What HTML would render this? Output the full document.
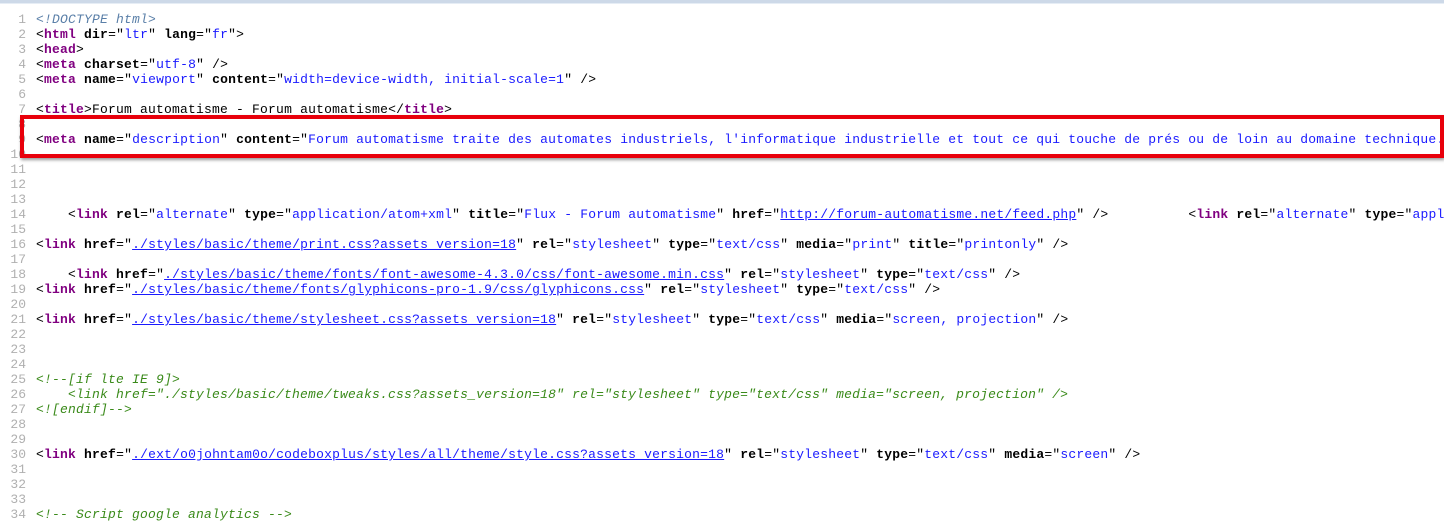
<!DOCTYPE html>
<html><head><meta charset="utf-8"><style>
html,body{margin:0;padding:0;background:#fff;width:1444px;height:519px;overflow:hidden}
.top{position:absolute;left:0;top:0;width:1444px;height:3px;background:#cdd9e8;border-bottom:1px solid #e6edf5}
.code{position:absolute;left:0;top:12px;font:13px/15px "Liberation Mono",monospace;letter-spacing:0.2px;white-space:pre;color:#000}
.ln{display:inline-block;width:26px;text-align:right;color:#b0b0b0;margin-right:10px;letter-spacing:0}
.t{color:#800080;font-weight:bold}
.a{font-weight:bold}
.v{color:#1a1aff}
.u{color:#1a1aff;text-decoration:underline}
.c{color:#3a8a1a;font-style:italic}
.d{color:#5a7fa8;font-style:italic}
.box{position:absolute;left:20px;top:115px;width:1416px;height:35px;border:4px solid #e8000b;box-shadow:1px 2px 3px rgba(0,0,0,.4)}
</style></head><body>
<div class="top"></div>
<div class="code"><span class="ln">1</span><span class="d">&lt;!DOCTYPE html&gt;</span>
<span class="ln">2</span>&lt;<span class="t">html</span> <span class="a">dir</span>="<span class="v">ltr</span>" <span class="a">lang</span>="<span class="v">fr</span>"&gt;
<span class="ln">3</span>&lt;<span class="t">head</span>&gt;
<span class="ln">4</span>&lt;<span class="t">meta</span> <span class="a">charset</span>="<span class="v">utf-8</span>" /&gt;
<span class="ln">5</span>&lt;<span class="t">meta</span> <span class="a">name</span>="<span class="v">viewport</span>" <span class="a">content</span>="<span class="v">width=device-width, initial-scale=1</span>" /&gt;
<span class="ln">6</span>
<span class="ln">7</span>&lt;<span class="t">title</span>&gt;Forum automatisme - Forum automatisme&lt;/<span class="t">title</span>&gt;
<span class="ln">8</span>
<span class="ln">9</span>&lt;<span class="t">meta</span> <span class="a">name</span>="<span class="v">description</span>" <span class="a">content</span>="<span class="v">Forum automatisme traite des automates industriels, l'informatique industrielle et tout ce qui touche de prés ou de loin au domaine technique.</span>
<span class="ln">10</span>
<span class="ln">11</span>
<span class="ln">12</span>
<span class="ln">13</span>
<span class="ln">14</span>    &lt;<span class="t">link</span> <span class="a">rel</span>="<span class="v">alternate</span>" <span class="a">type</span>="<span class="v">application/atom+xml</span>" <span class="a">title</span>="<span class="v">Flux - Forum automatisme</span>" <span class="a">href</span>="<span class="u">http://forum-automatisme.net/feed.php</span>" /&gt;          &lt;<span class="t">link</span> <span class="a">rel</span>="<span class="v">alternate</span>" <span class="a">type</span>="<span class="v">appl</span>
<span class="ln">15</span>
<span class="ln">16</span>&lt;<span class="t">link</span> <span class="a">href</span>="<span class="u">./styles/basic/theme/print.css?assets_version=18</span>" <span class="a">rel</span>="<span class="v">stylesheet</span>" <span class="a">type</span>="<span class="v">text/css</span>" <span class="a">media</span>="<span class="v">print</span>" <span class="a">title</span>="<span class="v">printonly</span>" /&gt;
<span class="ln">17</span>
<span class="ln">18</span>    &lt;<span class="t">link</span> <span class="a">href</span>="<span class="u">./styles/basic/theme/fonts/font-awesome-4.3.0/css/font-awesome.min.css</span>" <span class="a">rel</span>="<span class="v">stylesheet</span>" <span class="a">type</span>="<span class="v">text/css</span>" /&gt;
<span class="ln">19</span>&lt;<span class="t">link</span> <span class="a">href</span>="<span class="u">./styles/basic/theme/fonts/glyphicons-pro-1.9/css/glyphicons.css</span>" <span class="a">rel</span>="<span class="v">stylesheet</span>" <span class="a">type</span>="<span class="v">text/css</span>" /&gt;
<span class="ln">20</span>
<span class="ln">21</span>&lt;<span class="t">link</span> <span class="a">href</span>="<span class="u">./styles/basic/theme/stylesheet.css?assets_version=18</span>" <span class="a">rel</span>="<span class="v">stylesheet</span>" <span class="a">type</span>="<span class="v">text/css</span>" <span class="a">media</span>="<span class="v">screen, projection</span>" /&gt;
<span class="ln">22</span>
<span class="ln">23</span>
<span class="ln">24</span>
<span class="ln">25</span><span class="c">&lt;!--[if lte IE 9]&gt;</span>
<span class="ln">26</span><span class="c">    &lt;link href="./styles/basic/theme/tweaks.css?assets_version=18" rel="stylesheet" type="text/css" media="screen, projection" /&gt;</span>
<span class="ln">27</span><span class="c">&lt;![endif]--&gt;</span>
<span class="ln">28</span>
<span class="ln">29</span>
<span class="ln">30</span>&lt;<span class="t">link</span> <span class="a">href</span>="<span class="u">./ext/o0johntam0o/codeboxplus/styles/all/theme/style.css?assets_version=18</span>" <span class="a">rel</span>="<span class="v">stylesheet</span>" <span class="a">type</span>="<span class="v">text/css</span>" <span class="a">media</span>="<span class="v">screen</span>" /&gt;
<span class="ln">31</span>
<span class="ln">32</span>
<span class="ln">33</span>
<span class="ln">34</span><span class="c">&lt;!-- Script google analytics --&gt;</span>
</div>
<div class="box"></div>
</body></html>
